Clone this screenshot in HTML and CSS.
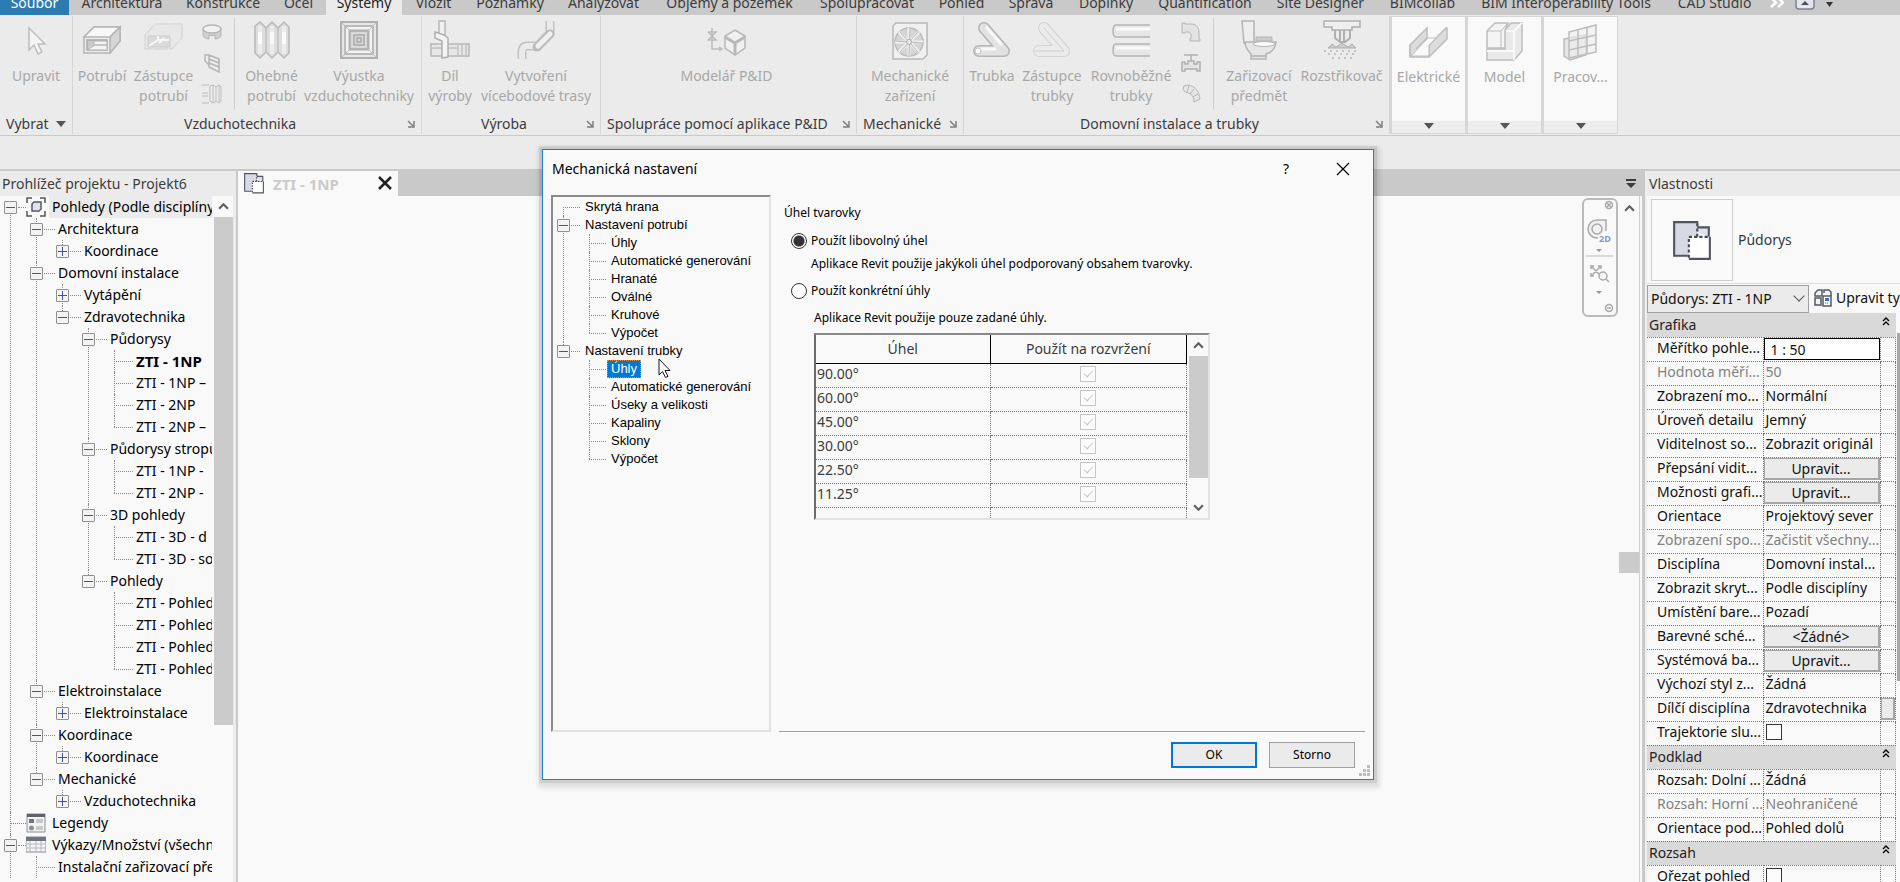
FILE: index.html
```html
<!DOCTYPE html>
<html lang="cs">
<head>
<meta charset="utf-8">
<title>Mechanická nastavení</title>
<link rel="stylesheet" href="styles.css">
</head>
<body>
<svg class="defs" aria-hidden="true">
  <symbol id="plan" viewBox="0 0 40 40">
    <path d="M3 3h22v5h11v9" fill="#dfe2ea" stroke="#50545e" stroke-width="2"/>
    <path d="M3 3h22v13h-8v19H3z" fill="#d6dae4"/>
    <path d="M25 3H3v32h13" fill="none" stroke="#50545e" stroke-width="2"/>
    <path d="M17 17h20v21H17z" fill="#fff"/>
    <path d="M37 17v21H17" fill="none" stroke="#50545e" stroke-width="2"/>
    <path d="M25 4v13M17 37V17h20" fill="none" stroke="#454952" stroke-width="2" stroke-dasharray="3 2"/>
  </symbol>
  <symbol id="launch" viewBox="0 0 8 8"><path d="M1 1l5 5M7 1v6H1" fill="none" stroke="#808080" stroke-width="1.5"/></symbol>
  <symbol id="down" viewBox="0 0 10 6"><path d="M0 0h10L5 6z"/></symbol>
  <symbol id="chev" viewBox="0 0 10 6"><path d="M1 5l4-4 4 4" fill="none" stroke="#606060" stroke-width="2"/></symbol>
  <symbol id="fold" viewBox="0 0 8 9"><path d="M1 4l3-3 3 3M1 8l3-3 3 3" fill="none" stroke="#000" stroke-width="1.4"/></symbol>
</svg>

<nav class="tabs" aria-label="Karty">
  <a class="file" href="#">Soubor</a><a href="#">Architektura</a><a href="#">Konstrukce</a><a href="#">Ocel</a><a class="on" href="#">Systémy</a><a href="#">Vložit</a><a href="#">Poznámky</a><a href="#">Analyzovat</a><a href="#">Objemy a pozemek</a><a href="#">Spolupracovat</a><a href="#">Pohled</a><a href="#">Správa</a><a href="#">Doplňky</a><a href="#">Quantification</a><a href="#">Site Designer</a><a href="#">BIMcollab</a><a href="#">BIM Interoperability Tools</a><a href="#">CAD Studio</a>
  <span class="tab-tools">
    <svg width="14" height="10" viewBox="0 0 14 10"><path d="M1 -2l5 4.500L1 7M8 -2l5 4.500L8 7" fill="none" stroke="#fff" stroke-width="2.500"/></svg>
    <svg width="20" height="12" viewBox="0 0 20 12"><rect x="1" y="-7" width="18" height="16" rx="3" fill="#e4e6ec" stroke="#7d8290" stroke-width="1.500"/><path d="M6 5l4-4 4 4z" fill="#4a4f5a"/></svg>
    <svg width="7" height="10" viewBox="0 0 7 10"><path d="M0 2h7L3.500 7z" fill="#333"/></svg>
  </span>
</nav>

<section class="ribbon">
  <div class="panel p-sel">
    <div class="tools"><button class="tool">
      <svg viewBox="0 0 40 40"><path d="M13 8v22l5-5 4 9 4-2-4-8h7z" fill="#f4f4f4" stroke="#bdbdbd" stroke-width="1.500"/></svg>Upravit</button></div>
    <div class="cap">Vybrat <svg class="tri" width="10" height="6"><use href="#down"/></svg></div>
  </div>
  <div class="panel p-hvac">
    <div class="tools">
      <button class="tool"><svg viewBox="0 0 40 40"><path d="M2 17L12 7h26v14L28 33H2z" fill="#ececec" stroke="#b5b5b5" stroke-width="1.500"/><path d="M2 17L12 7h26L28 17z" fill="#f8f8f8" stroke="#b5b5b5" stroke-width="1.500"/><path d="M28 17l10-10v14L28 33z" fill="#d6d6d6" stroke="#b5b5b5" stroke-width="1.500"/><path d="M5 20h20v10H5z" fill="#c9c9c9" stroke="#aaa" stroke-width="1.500"/><path d="M12 21h13v4H12zM5 30l8-5h12v5z" fill="#f3f3f3" stroke="#b5b5b5"/></svg>Potrubí</button>
      <button class="tool"><svg viewBox="0 0 40 40"><path d="M1 15L11 4h27v14L28 29H1z" fill="#e8e8e8" stroke="#cfcfcf" stroke-dasharray="14 1"/><path d="M4 16h22v11H4z" fill="#dadada" stroke="#ccc"/><path d="M5 26l9-6h11M14 20v-4M15 23l5-5" fill="none" stroke="#f7f7f7" stroke-width="2"/></svg>Zástupce<br>potrubí</button>
      <span class="stack">
        <svg viewBox="0 0 20 20"><path d="M1 7v6c0 2 3 4 6 4v-4c2 1 4 1 6 0v4c3 0 6-2 6-4V7z" fill="#d0d0d0" stroke="#b5b5b5"/><ellipse cx="10" cy="7" rx="9" ry="4" fill="#f0f0f0" stroke="#b5b5b5" stroke-width="1.500"/></svg>
        <svg viewBox="0 0 20 20"><path d="M7 2l10 4v13L7 14zM7 6l10 4M7 10l10 4M7 2L3 2v6l4 4" fill="none" stroke="#b5b5b5" stroke-width="1.500"/></svg>
        <svg viewBox="0 0 20 20"><path d="M0 1h7M0 9h6M0 12h6M0 19h7" stroke="#bbb" fill="none"/><path d="M8 2l3-1 3 2 3-2 2 2v14l-2 2-3-2-3 2-3-2zM11 1v17M14 3v14M17 1v17" fill="#efefef" stroke="#bbb"/></svg>
      </span>
      <i class="bar"></i>
      <button class="tool"><svg viewBox="0 0 40 40"><path d="M3 6l5-4 6 6 6-6 6 6 6-6 5 5v26l-5 5-6-6-6 6-6-6-6 6-5-5z" fill="#ddd" stroke="#b9b9b9" stroke-width="1.500"/><path d="M8 6v28M20 6v28M32 6v28" stroke="#ececec" stroke-width="4"/><path d="M8 12v12M20 12v12M32 12v12" stroke="#fafafa" stroke-width="4"/><path d="M14 8v25M26 8v25" stroke="#c2c2c2" stroke-width="1.500"/></svg>Ohebné<br>potrubí</button>
      <button class="tool"><svg viewBox="0 0 40 40"><path d="M2 2h36v36H2z" fill="#e6e6e6" stroke="#b0b0b0" stroke-width="2"/><path d="M6 6h28v28H6z" fill="#cfcfcf" stroke="#b0b0b0" stroke-width="1.500"/><path d="M8 8h24v24H8z" fill="none" stroke="#f2f2f2" stroke-width="2"/><path d="M11 11h18v18H11zM15 15h10v10H15zM18 18h4v4h-4z" fill="#d9d9d9" stroke="#a9a9a9" stroke-width="1.500"/><path d="M2 2l9 9M38 2l-9 9M2 38l9-9M38 38l-9-9" stroke="#bcbcbc"/></svg>Výustka<br>vzduchotechniky</button>
    </div>
    <div class="cap">Vzduchotechnika<svg class="launch" width="8" height="8"><use href="#launch"/></svg></div>
  </div>
  <div class="panel p-fab">
    <div class="tools">
      <button class="tool"><svg viewBox="0 0 40 40"><path d="M9 1h6v14H9z" fill="#f2f2f2" stroke="#b8b8b8" stroke-width="1.500"/><path d="M1 24h38v12H1z" fill="#e6e6e6" stroke="#b8b8b8" stroke-width="1.500"/><path d="M1 28h26M28 24v12M32 24v12M36 24v12" stroke="#c2c2c2" stroke-width="1.500"/><path d="M5 12l9 3 4 3v19l-6 1V21l-7-3z" fill="#f4f4f4" stroke="#b0b0b0" stroke-width="1.500"/></svg>Díl<br>výroby</button>
      <button class="tool"><svg viewBox="0 0 40 40"><path d="M34 1v12L22 26H11c-4 0-5 3-5 7v6" fill="none" stroke="#c2c2c2" stroke-width="9"/><path d="M34 1v12L22 26H11c-4 0-5 3-5 7v6" fill="none" stroke="#eaeaea" stroke-width="6"/><path d="M34 14L21 27" stroke="#bcbcbc" stroke-width="9" stroke-linecap="round"/><path d="M34 14L22 26" stroke="#f0f0f0" stroke-width="5" stroke-linecap="round"/></svg>Vytvoření<br>vícebodové trasy</button>
    </div>
    <div class="cap">Výroba<svg class="launch" width="8" height="8"><use href="#launch"/></svg></div>
  </div>
  <div class="panel p-pid">
    <div class="tools"><button class="tool"><svg viewBox="0 0 40 40"><path d="M5 8v21h9M1 12h8l-8 8h8l-8-8M12 27l3 2-3 2" fill="none" stroke="#bcbcbc" stroke-width="1.500"/><path d="M28 10l10 6v12l-10 7-10-7V16z" fill="#f0f0f0" stroke="#b8b8b8" stroke-width="1.500"/><path d="M18 17l10 6 10-6M28 23v12" fill="none" stroke="#b8b8b8" stroke-width="3"/></svg>Modelář P&amp;ID</button></div>
    <div class="cap">Spolupráce pomocí aplikace P&amp;ID<svg class="launch" width="8" height="8"><use href="#launch"/></svg></div>
  </div>
  <div class="panel p-mech">
    <div class="tools"><button class="tool"><svg viewBox="0 0 40 40"><path d="M3 6l3-3h31v32l-4 4H3z" fill="#f0f0f0" stroke="#b8b8b8" stroke-width="1.500"/><circle cx="19" cy="22" r="14" fill="#d5d5d5" stroke="#bcbcbc" stroke-width="1.500"/><path d="M19 8v28M5 22h28M9 12l20 20M29 12L9 32" stroke="#f2f2f2" stroke-width="3"/><path d="M20 8l-1 28M5 21l28 2M10 12l18 20M28 12L10 32" stroke="#b5b5b5"/><circle cx="19" cy="22" r="2.500" fill="#eee" stroke="#aaa"/></svg>Mechanické<br>zařízení</button></div>
    <div class="cap">Mechanické<svg class="launch" width="8" height="8"><use href="#launch"/></svg></div>
  </div>
  <div class="panel p-pipe">
    <div class="tools">
      <button class="tool"><svg viewBox="0 0 40 40"><path d="M12 8l20 23H7" fill="none" stroke="#b5b5b5" stroke-width="12" stroke-linecap="round" stroke-linejoin="round"/><path d="M12 8l20 23H7" fill="none" stroke="#e2e2e2" stroke-width="9" stroke-linecap="round" stroke-linejoin="round"/><path d="M14 7l16 18M24 29H8" stroke="#f8f8f8" stroke-width="3"/><circle cx="6" cy="31" r="3" fill="#fafafa" stroke="#c4c4c4"/></svg>Trubka</button>
      <button class="tool"><svg viewBox="0 0 40 40"><path d="M12 8l20 23H7" fill="none" stroke="#d2d2d2" stroke-width="12" stroke-linecap="round" stroke-linejoin="round"/><path d="M12 8l20 23H7" fill="none" stroke="#ebebeb" stroke-width="10" stroke-linecap="round" stroke-linejoin="round"/><path d="M12 8l20 23H3" fill="none" stroke="#cdcdcd"/></svg>Zástupce<br>trubky</button>
      <button class="tool"><svg viewBox="0 0 40 40"><path d="M39 5H5c-4 0-4 12 0 12h34M39 24H5c-4 0-4 12 0 12h34" fill="#e6e6e6" stroke="#b5b5b5" stroke-width="1.500"/><path d="M5 9h34M5 28h34" stroke="#fafafa" stroke-width="3"/></svg>Rovnoběžné<br>trubky</button>
      <span class="stack">
        <svg viewBox="0 0 20 20"><path d="M1 1h3v1h6c6 0 8 4 8 9v6h1v2H9v-2h1v-4c0-2-1-3-3-3H4v1H1z" fill="#e3e3e3" stroke="#b5b5b5"/></svg>
        <svg viewBox="0 0 20 20"><path d="M3 2h14M10 2v6M7 8h6v3h3v-2h3v9h-3v-2H4v2H1V9h3v2h3z" fill="#e3e3e3" stroke="#b0b0b0" stroke-width="1.500"/></svg>
        <svg viewBox="0 0 20 20"><path d="M3 2l4-1c7 1 11 6 12 14l-6 3c0-6-3-9-9-10L2 5zM8 2L6 8M13 5l-4 5M17 10l-5 3" fill="#e6e6e6" stroke="#b5b5b5"/></svg>
      </span>
      <i class="bar"></i>
      <button class="tool"><svg viewBox="0 0 40 40"><path d="M3 1h12v22H5z" fill="#eee" stroke="#b5b5b5" stroke-width="1.500"/><path d="M17 17h16v4H17z" fill="#ccc" stroke="#b5b5b5"/><path d="M6 22h31c-1 8-6 11-10 12v5H12v-5c-3-3-6-8-6-12z" fill="#e6e6e6" stroke="#b5b5b5" stroke-width="1.500"/><ellipse cx="25" cy="24" rx="11" ry="2.500" fill="#f8f8f8" stroke="#b5b5b5"/><path d="M12 36h16" stroke="#bbb" stroke-width="2"/></svg>Zařizovací<br>předmět</button>
      <button class="tool"><svg viewBox="0 0 40 40"><path d="M2 1h36v6H30v3H10V7H2z" fill="#efefef" stroke="#b0b0b0" stroke-width="1.500"/><path d="M13 10v8l5 4h5l5-4v-8M18 10v12M22 10v12" fill="none" stroke="#b0b0b0" stroke-width="2"/><path d="M6 28l4-4 4 3 6-4 6 4 4-3 4 4z" fill="#ccc" stroke="#b0b0b0"/><path d="M2 31h36M6 34h28M10 38h20" stroke="#b8b8b8" stroke-width="1.500" stroke-dasharray="2 4"/></svg>Rozstřikovač</button>
    </div>
    <div class="cap">Domovní instalace a trubky<svg class="launch" width="8" height="8"><use href="#launch"/></svg></div>
  </div>
  <button class="mini"><svg viewBox="0 0 40 40"><path d="M1 24L18 7v10L1 34z" fill="#dcdcdc" stroke="#bdbdbd" stroke-width="1.500"/><path d="M1 24v12h19L38 18V7h-1L20 24v12" fill="#dcdcdc" stroke="#bdbdbd" stroke-width="1.500"/><path d="M2 35l17-18h8l-7 7v11z" fill="#fafafa" stroke="#bdbdbd"/></svg>Elektrické<span><svg class="tri" width="10" height="6"><use href="#down"/></svg></span></button>
  <button class="mini"><svg viewBox="0 0 40 40"><path d="M2 10l8-8h13l-2 5v20H2z" fill="#f4f4f4" stroke="#bdbdbd" stroke-width="1.500"/><path d="M2 10h14v17M16 10l6-7" fill="none" stroke="#bdbdbd"/><path d="M2 28h18V9l6-7h11v28l-8 9H2z" fill="#e9e9e9" stroke="#bdbdbd" stroke-width="1.500"/><path d="M29 39V10h-8M29 10l8-8M2 30h27" fill="none" stroke="#fafafa" stroke-width="2"/></svg>Model<span><svg class="tri" width="10" height="6"><use href="#down"/></svg></span></button>
  <button class="mini"><svg viewBox="0 0 40 40"><path d="M3 18l22-4v20L9 39l-6-4z" fill="#e6e6e6" stroke="#bdbdbd" stroke-width="1.500"/><path d="M8 11l27-7v27L8 37zM17 9v26M26 7v26M8 20l27-6M8 29l27-6" fill="#eee" fill-opacity=".6" stroke="#bdbdbd" stroke-width="1.500"/></svg>Pracov...<span><svg class="tri" width="10" height="6"><use href="#down"/></svg></span></button>
</section>
<div class="options"></div>

<main>
  <aside class="browser">
    <h2>Prohlížeč projektu - Projekt6</h2>
    <div class="scroller">
      <ul class="tree">
        <li><div class="row root"><button class="ex" aria-label="Sbalit"></button><svg width="20" height="20" viewBox="0 0 20 20"><path d="M1 6V1h5M14 1h5v5M19 14v5h-5M6 19H1v-5" fill="none" stroke="#555" stroke-width="1.500"/><path d="M6 7l2-2h7v7l-2 2H6z" fill="#e0e3ea" stroke="#555a66" stroke-width="1.500"/></svg><span class="hl">Pohledy (Podle disciplíny)</span></div>
          <ul>
            <li><div class="row"><button class="ex" aria-label="Sbalit"></button><span>Architektura</span></div>
              <ul><li><div class="row"><button class="ex plus" aria-label="Rozbalit"></button><span>Koordinace</span></div></li></ul></li>
            <li><div class="row"><button class="ex" aria-label="Sbalit"></button><span>Domovní instalace</span></div>
              <ul>
                <li><div class="row"><button class="ex plus" aria-label="Rozbalit"></button><span>Vytápění</span></div></li>
                <li><div class="row"><button class="ex" aria-label="Sbalit"></button><span>Zdravotechnika</span></div>
                  <ul>
                    <li><div class="row"><button class="ex" aria-label="Sbalit"></button><span>Půdorysy</span></div>
                      <ul><li><div class="row leaf"><b>ZTI - 1NP</b></div></li><li><div class="row leaf"><span>ZTI - 1NP –</span></div></li><li><div class="row leaf"><span>ZTI - 2NP</span></div></li><li><div class="row leaf"><span>ZTI - 2NP –</span></div></li></ul></li>
                    <li><div class="row"><button class="ex" aria-label="Sbalit"></button><span>Půdorysy stropů</span></div>
                      <ul><li><div class="row leaf"><span>ZTI - 1NP -</span></div></li><li><div class="row leaf"><span>ZTI - 2NP -</span></div></li></ul></li>
                    <li><div class="row"><button class="ex" aria-label="Sbalit"></button><span>3D pohledy</span></div>
                      <ul><li><div class="row leaf"><span>ZTI - 3D - d</span></div></li><li><div class="row leaf"><span>ZTI - 3D - so</span></div></li></ul></li>
                    <li><div class="row"><button class="ex" aria-label="Sbalit"></button><span>Pohledy</span></div>
                      <ul><li><div class="row leaf"><span>ZTI - Pohled</span></div></li><li><div class="row leaf"><span>ZTI - Pohled</span></div></li><li><div class="row leaf"><span>ZTI - Pohled</span></div></li><li><div class="row leaf"><span>ZTI - Pohled</span></div></li></ul></li>
                  </ul></li>
              </ul></li>
            <li><div class="row"><button class="ex" aria-label="Sbalit"></button><span>Elektroinstalace</span></div>
              <ul><li><div class="row"><button class="ex plus" aria-label="Rozbalit"></button><span>Elektroinstalace</span></div></li></ul></li>
            <li><div class="row"><button class="ex" aria-label="Sbalit"></button><span>Koordinace</span></div>
              <ul><li><div class="row"><button class="ex plus" aria-label="Rozbalit"></button><span>Koordinace</span></div></li></ul></li>
            <li><div class="row"><button class="ex" aria-label="Sbalit"></button><span>Mechanické</span></div>
              <ul><li><div class="row"><button class="ex plus" aria-label="Rozbalit"></button><span>Vzduchotechnika</span></div></li></ul></li>
          </ul></li>
        <li><div class="row root leaf"><svg width="20" height="20" viewBox="0 0 20 20"><path d="M1 1h18v18H1z" fill="#f2f2f2" stroke="#8a8d94"/><path d="M1 1h18v3H1z" fill="#5f646e"/><path d="M3 6h5v4H3z" fill="#70757f"/><circle cx="5.500" cy="15" r="2.500" fill="#8a8f98"/><path d="M10 7h7M10 9h7M10 14h7M10 16h7" stroke="#9a9ea6"/></svg><span class="name">Legendy</span></div></li>
        <li class="more"><div class="row root"><button class="ex" aria-label="Sbalit"></button><svg width="20" height="20" viewBox="0 0 20 20"><path d="M0 2h20v15H0z" fill="#f4f4f4" stroke="#8a8d94"/><path d="M0 2h20v4H0z" fill="#70747d"/><path d="M4 6v11M10 6v11M15 6v11M0 9h20M0 13h20" stroke="#b8bac0"/></svg><span class="name">Výkazy/Množství (všechny)</span></div>
          <ul><li class="more"><div class="row leaf"><span>Instalační zařizovací předměty</span></div></li></ul></li>
      </ul>
      <div class="vbar"><svg class="up" width="11" height="7"><use href="#chev"/></svg><i></i></div>
    </div>
  </aside>

  <section class="view">
    <div class="view-tabs">
      <div class="view-tab"><svg width="22" height="22"><use href="#plan"/></svg><b>ZTI - 1NP</b><button aria-label="Zavřít"><svg width="14" height="14" viewBox="0 0 14 14"><path d="M1 1l12 12M13 1L1 13" stroke="#222" stroke-width="2.500"/></svg></button></div>
      <svg class="list" width="10" height="10" viewBox="0 0 10 10"><path d="M0 0h10v2H0zM0 4h10L5 9z" fill="#3b3b3b"/></svg>
    </div>
    <div class="canvas">
      <div class="navbar">
        <svg width="36" height="118" viewBox="0 0 36 118">
          <g fill="none" stroke="#aaa" stroke-width="1.500"><circle cx="27" cy="7" r="3.500"/><path d="M25 5l4 4M29 5l-4 4M25 110h4"/><circle cx="27" cy="110" r="3.500"/>
          <path d="M24 33V22H15a9 9 0 0 0 0 18h1" fill="#f1f1f1"/><circle cx="15" cy="31" r="5"/><path d="M4 58h27" stroke="#ccc"/><path d="M9 68l9 9M19 68l-9 9M9 71v-3h3M16 68h3v3M9 75v3h3"/><circle cx="21" cy="78" r="4" fill="#f5f5f5"/><path d="M24 81l3 3"/></g>
          <text class="nav2d" x="17" y="44">2D</text><path d="M14 51h6l-3 3zM14 93h6l-3 3z" fill="#999"/></svg>
      </div>
      <div class="view-bar"><svg class="up" width="11" height="7"><use href="#chev"/></svg><i></i></div>
    </div>
  </section>

  <aside class="props">
    <h2>Vlastnosti</h2>
    <div class="type"><span class="thumb"><svg width="42" height="42"><use href="#plan"/></svg></span>Půdorys</div>
    <div class="pick"><select aria-label="Typ"><option>Půdorys: ZTI - 1NP</option></select>
      <button><svg width="18" height="18" viewBox="0 0 18 18"><path d="M1 4l3-3h4v6H1zM10 4V1h5l2 2v4M1 9h6v7H1z" fill="#f2f2f2" stroke="#555a66" stroke-width="1.500"/><path d="M9 7h8v10H9z" fill="#fff" stroke="#555a66" stroke-width="1.500"/><path d="M11 9h4v3h-4z" fill="#2e75b6"/><path d="M11 14h4" stroke="#555" stroke-dasharray="1 1"/></svg>Upravit typ</button></div>
    <div class="grid">
      <table>
        <colgroup><col class="c1"><col class="c2"><col class="c3"></colgroup>
        <tr class="sec"><th colspan="3">Grafika<svg width="8" height="9"><use href="#fold"/></svg></th></tr>
        <tr><td>Měřítko pohle...</td><td class="ctl"><input class="scale" value="1 : 50" aria-label="Měřítko pohledu"></td><td></td></tr>
        <tr class="dim"><td>Hodnota měří...</td><td>50</td><td></td></tr>
        <tr><td>Zobrazení mo...</td><td>Normální</td><td></td></tr>
        <tr><td>Úroveň detailu</td><td>Jemný</td><td></td></tr>
        <tr><td>Viditelnost so...</td><td>Zobrazit originál</td><td></td></tr>
        <tr><td>Přepsání vidit...</td><td class="ctl"><button>Upravit...</button></td><td></td></tr>
        <tr><td>Možnosti grafi...</td><td class="ctl"><button>Upravit...</button></td><td></td></tr>
        <tr><td>Orientace</td><td>Projektový sever</td><td></td></tr>
        <tr class="dim"><td>Zobrazení spo...</td><td>Začistit všechny...</td><td></td></tr>
        <tr><td>Disciplína</td><td>Domovní instal...</td><td></td></tr>
        <tr><td>Zobrazit skryt...</td><td>Podle disciplíny</td><td></td></tr>
        <tr><td>Umístění bare...</td><td>Pozadí</td><td></td></tr>
        <tr><td>Barevné sché...</td><td class="ctl"><button>&lt;Žádné&gt;</button></td><td></td></tr>
        <tr><td>Systémová ba...</td><td class="ctl"><button>Upravit...</button></td><td></td></tr>
        <tr><td>Výchozí styl z...</td><td>Žádná</td><td></td></tr>
        <tr><td>Dílčí disciplína</td><td>Zdravotechnika</td><td class="ctl"><button aria-label="Přidružit"></button></td></tr>
        <tr><td><label for="sun">Trajektorie slu...</label></td><td><input type="checkbox" id="sun"></td><td></td></tr>
        <tr class="sec"><th colspan="3">Podklad<svg width="8" height="9"><use href="#fold"/></svg></th></tr>
        <tr><td>Rozsah: Dolní ...</td><td>Žádná</td><td></td></tr>
        <tr class="dim"><td>Rozsah: Horní ...</td><td>Neohraničené</td><td></td></tr>
        <tr><td>Orientace pod...</td><td>Pohled dolů</td><td></td></tr>
        <tr class="sec"><th colspan="3">Rozsah<svg width="8" height="9"><use href="#fold"/></svg></th></tr>
        <tr><td><label for="crop">Ořezat pohled</label></td><td><input type="checkbox" id="crop"></td><td></td></tr>
      </table>
      <i class="thumbbar"></i>
    </div>
  </aside>
</main>

<div class="dialog" role="dialog" aria-labelledby="dt">
  <header><h1 id="dt">Mechanická nastavení</h1>
    <button aria-label="Nápověda">?</button>
    <button aria-label="Zavřít"><svg width="14" height="14" viewBox="0 0 14 14"><path d="M1 1l12 12M13 1L1 13" stroke="#000" stroke-width="1.200"/></svg></button></header>
  <div class="body">
    <div class="list-box">
      <ul class="tree small">
        <li><div class="row leaf"><span>Skrytá hrana</span></div></li>
        <li><div class="row"><button class="ex" aria-label="Sbalit"></button><span>Nastavení potrubí</span></div>
          <ul><li><div class="row leaf"><span>Úhly</span></div></li><li><div class="row leaf"><span>Automatické generování</span></div></li><li><div class="row leaf"><span>Hranaté</span></div></li><li><div class="row leaf"><span>Oválné</span></div></li><li><div class="row leaf"><span>Kruhové</span></div></li><li><div class="row leaf"><span>Výpočet</span></div></li></ul></li>
        <li><div class="row"><button class="ex" aria-label="Sbalit"></button><span>Nastavení trubky</span></div>
          <ul><li><div class="row leaf"><span class="sel">Úhly</span></div></li><li><div class="row leaf"><span>Automatické generování</span></div></li><li><div class="row leaf"><span>Úseky a velikosti</span></div></li><li><div class="row leaf"><span>Kapaliny</span></div></li><li><div class="row leaf"><span>Sklony</span></div></li><li><div class="row leaf"><span>Výpočet</span></div></li></ul></li>
      </ul>
    </div>
    <div class="page">
      <h3>Úhel tvarovky</h3>
      <label class="opt"><input type="radio" name="angle" checked>Použít libovolný úhel</label>
      <p>Aplikace Revit použije jakýkoli úhel podporovaný obsahem tvarovky.</p>
      <label class="opt"><input type="radio" name="angle">Použít konkrétní úhly</label>
      <p class="second">Aplikace Revit použije pouze zadané úhly.</p>
      <div class="angles">
        <table>
          <tr><th>Úhel</th><th>Použít na rozvržení</th></tr>
          <tr><td>90.00°</td><td><input type="checkbox" aria-label="90.00°" checked disabled></td></tr>
          <tr><td>60.00°</td><td><input type="checkbox" aria-label="60.00°" checked disabled></td></tr>
          <tr><td>45.00°</td><td><input type="checkbox" aria-label="45.00°" checked disabled></td></tr>
          <tr><td>30.00°</td><td><input type="checkbox" aria-label="30.00°" checked disabled></td></tr>
          <tr><td>22.50°</td><td><input type="checkbox" aria-label="22.50°" checked disabled></td></tr>
          <tr><td>11.25°</td><td><input type="checkbox" aria-label="11.25°" checked disabled></td></tr>
          <tr><td></td><td></td></tr>
        </table>
        <div class="abar"><svg class="up" width="11" height="7"><use href="#chev"/></svg><i></i><svg class="dn" width="11" height="7" viewBox="0 0 10 6"><path d="M1 1l4 4 4-4" fill="none" stroke="#606060" stroke-width="2"/></svg></div>
      </div>
    </div>
  </div>
  <footer><button class="ok">OK</button><button>Storno</button></footer>
  <svg class="grip" width="12" height="12" viewBox="0 0 12 12"><path d="M8 0h3v3H8zM4 4h3v3H4zM8 4h3v3H8zM0 8h3v3H0zM4 8h3v3H4zM8 8h3v3H8z" fill="#bdbdbd"/></svg>
  <svg class="cursor" width="13" height="20" viewBox="0 0 13 20"><path d="M1 1v16l3.500-3.500 3 6 2.500-1.200-3-5.800h5z" fill="#fff" stroke="#112" /></svg>
</div>
</body>
</html>
```
FILE: styles.css
```css
:root {
  --ui: "Noto Sans", "Open Sans", sans-serif;
  --paper: #f9f9f9;
  --chrome: #ebebeb;
  --line: #c9c9c9;
}
* { box-sizing: border-box; }
body {
  margin: 0;
  height: 100vh;
  display: flex;
  flex-direction: column;
  overflow: hidden;
  background: var(--chrome);
  color: #000;
  font: 14px/20px var(--ui);
}
button, input, select { font: inherit; color: inherit; margin: 0; padding: 0; }
button { background: none; border: 0; white-space: nowrap; }
h1, h2, h3, p, ul { margin: 0; padding: 0; font-weight: normal; list-style: none; }
svg { flex: none; display: block; }
.defs { position: absolute; width: 0; height: 0; }

/* ribbon tabs */
.tabs {
  flex: none;
  height: 15px;
  display: grid;
  grid-template-columns: 69px 106px 96px 55px 76px 63px 90px 97px 155px 120px 69px 70px 80px 118px 113px 91px 196px 101px 1fr;
  align-content: end;
  align-items: end;
  overflow: hidden;
  background: var(--line);
}
.tabs a { color: #3c3c3c; text-decoration: none; text-align: center; white-space: nowrap; line-height: 24px; }
.tabs .file { background: #2b7bb3; color: #fff; }
.tabs .on { background: var(--chrome); color: #222; }
.tab-tools { display: flex; align-items: flex-start; gap: 11px; height: 15px; padding-left: 5px; }

/* ribbon */
.ribbon { flex: none; display: flex; height: 121px; padding-top: 1px; border-bottom: 1px solid var(--line); }
.panel { display: flex; flex-direction: column; height: 118px; border-right: 1px solid #d6d6d6; }
.p-sel { width: 73px; }
.p-hvac { width: 349px; }
.p-fab { width: 179px; }
.p-pid { width: 256px; }
.p-mech { width: 107px; }
.p-pipe { width: 426px; }
.tools { flex: 1; display: grid; justify-content: start; padding-top: 4px; }
.p-sel .tools { grid-template-columns: 72px; }
.p-hvac .tools { grid-template-columns: 58px 65px 32px 12px 63px 112px; }
.p-fab .tools { grid-template-columns: 56px 116px; }
.p-pid .tools { grid-template-columns: 251px; }
.p-mech .tools { grid-template-columns: 106px; }
.p-pipe .tools { grid-template-columns: 56px 64px 94px 26px 18px 74px 91px; }
.tool, .mini { display: flex; flex-direction: column; align-items: center; color: #a8a8a8; text-align: center; }
.tool > svg, .mini > svg { width: 40px; height: 40px; margin-bottom: 6px; }
.stack { display: flex; flex-direction: column; align-items: center; gap: 11px; padding-top: 2px; }
.stack svg { width: 20px; height: 20px; }
.bar { width: 1px; height: 91px; margin: -2px auto 0; background: #cdcdcd; }
.cap { display: flex; align-items: center; height: 20px; padding-left: 6px; color: #3c3c3c; white-space: nowrap; }
.cap .launch { margin-left: auto; margin-right: 6px; }
.p-hvac .cap::before, .p-fab .cap::before, .p-pipe .cap::before { content: ""; margin-right: auto; }
.p-hvac .cap, .p-fab .cap, .p-pipe .cap { padding-left: 0; }
.tri { fill: #555; }
.p-sel .tri { margin-left: 7px; }
.mini { width: 76px; height: 118px; padding-top: 4px; background: var(--paper); border: 1px solid #d6d6d6; border-width: 1px 1px 1px 2px; }
.mini span { margin-top: auto; align-self: stretch; height: 12px; padding-top: 2px; background: #ededf0; }
.mini .tri { margin: 0 auto; }
.options { flex: none; height: 35px; border-bottom: 2px solid var(--line); }

main { flex: 1; min-height: 0; display: flex; background: var(--paper); }
h2 { flex: none; height: 25px; padding-left: 2px; background: var(--chrome); color: #3c3c3c; font-size: 14px; line-height: 25px; }

/* trees */
.browser { width: 238px; flex: none; display: flex; flex-direction: column; border-right: 2px solid var(--line); }
.scroller { flex: 1; min-height: 0; display: flex; overflow: hidden; }
.scroller > .tree { flex: 1; min-width: 0; overflow: hidden; }
.tree li { position: relative; }
.tree li::before { content: ""; position: absolute; left: 10px; top: 0; bottom: 0; border-left: 1px dotted #888; }
.tree li:last-child::before { bottom: auto; height: 11px; }
.tree li.more::before { bottom: 0; height: auto; }
.tree > li:first-child::before { top: 11px; }
.tree ul { margin-left: 26px; }
.row { position: relative; display: flex; align-items: center; height: 22px; padding-left: 4px; white-space: nowrap; }
.row::before { content: ""; order: 1; flex: none; width: 11px; margin: 0 3px 0 1px; border-top: 1px dotted #888; }
.row > * { order: 2; }
.row > .ex { order: 0; flex: none; width: 13px; height: 13px; border: 1px solid #919191; border-radius: 1px; background: linear-gradient(#3b56a5, #3b56a5) center / 9px 1px no-repeat, #f3f3f3; }
.row > .plus { background: linear-gradient(#3b56a5, #3b56a5) center / 9px 1px no-repeat, linear-gradient(#3b56a5, #3b56a5) center / 1px 9px no-repeat, #f3f3f3; }
.row.leaf { padding-left: 10px; }
.row.leaf::before { width: 19px; margin: 0 3px 0 0; }
.row b { font-size: 15px; line-height: 22px; }
.row.root::before { width: 8px; margin-right: 0; }
.row.root.leaf::before { width: 16px; }
.hl { margin-left: 3px; padding: 0 3px; background: var(--chrome); line-height: 22px; }
.name { margin-left: 6px; }
.vbar { width: 24px; flex: none; padding-left: 2px; border-right: 3px solid #ececec; background: linear-gradient(var(--paper), var(--paper)); }
.vbar .up { margin: 7px auto; }
.vbar i { display: block; height: 508px; background: #cbcbcb; }

/* drawing view */
.view { flex: 1; min-width: 0; display: flex; flex-direction: column; border-right: 3px solid var(--line); }
.view-tabs { flex: none; display: flex; justify-content: space-between; height: 25px; background: var(--line); }
.view-tab { display: flex; align-items: center; width: 160px; padding-left: 5px; background: var(--paper); color: #cbcbcb; }
.view-tab b { margin-left: 8px; font-size: 15px; line-height: 24px; }
.view-tab svg { margin-bottom: 1px; }
.view-tab button { margin: 0 6px 0 auto; }
.view-tabs .list { margin: 8px 6px 0 0; }
.canvas { flex: 1; display: flex; justify-content: flex-end; margin-right: 2px; border-right: 1px solid #d0d0d0; }
.navbar { height: 119px; width: 36px; margin: 2px 0 0; border: 2px solid #bababa; border-radius: 6px; background: var(--paper); }
.navbar svg { margin: -2px; }
.nav2d { font: bold 9px var(--ui); fill: #7d9fcf; }
.view-bar { width: 20px; margin-left: 1px; }
.view-bar .up { margin: 9px auto 0; }
.view-bar i { display: block; height: 21px; margin-top: 340px; background: #cbcbcb; }

/* properties */
.props { width: 255px; flex: none; display: flex; flex-direction: column; overflow: hidden; border-left: 2px solid #efefef; color: #111; }
.type { flex: none; display: flex; align-items: center; gap: 5px; height: 88px; padding-left: 4px; border-bottom: 1px solid #ddd; color: #333a4a; }
.thumb { display: grid; place-items: center; width: 82px; height: 82px; border: 1px solid #ccc; }
.pick { position: relative; flex: none; display: flex; align-items: center; gap: 5px; height: 29px; }
.pick select { appearance: none; flex: none; width: 162px; height: 28px; padding-left: 3px; border: 1px solid #a0a0a0; border-radius: 0; background: var(--chrome); }
.pick::after { content: ""; position: absolute; left: 148px; top: 8px; width: 7px; height: 7px; border: solid #555; border-width: 0 1px 1px 0; transform: rotate(45deg); }
.pick button { display: flex; align-items: center; gap: 4px; padding-bottom: 2px; }
.grid { flex: none; display: flex; gap: 1px; }
.props table { width: 249px; flex: none; table-layout: fixed; border-collapse: collapse; white-space: nowrap; }
.c1 { width: 116px; }
.c2 { width: 117px; }
.props tr { height: 24px; }
.props td { height: 24px; padding: 0 0 2px 2px; border: 1px dotted #777; border-left-width: 0; overflow: hidden; line-height: 20px; }
.props td:first-child { padding-left: 10px; }
.props .sec th { height: 24px; padding: 0 6px 0 2px; background: #d9d9d9; color: #222; font-weight: normal; text-align: left; }
.sec svg { float: right; margin-top: 2px; }
.dim { color: #828282; }
.props td.ctl { padding: 0; }
.ctl > * { display: block; width: 100%; height: 22px; line-height: 18px; }
.ctl button { border: 1px solid #a6a6a6; border-width: 1px 2px 2px 1px; background: var(--chrome); }
.scale { border: 1px solid #000; background: #fff; padding-left: 6px; }
input[type="checkbox"] { appearance: none; display: block; width: 16px; height: 16px; border: 1px solid #333; background: #fcfcfc; }
.thumbbar { width: 5px; height: 348px; margin-top: 20px; background: #a8a8a8; }

/* dialog */
.dialog {
  position: absolute;
  left: 542px;
  top: 149px;
  width: 832px;
  min-height: 631px;
  display: flex;
  flex-direction: column;
  border: 1px solid #1f7fce;
  background: var(--paper);
  box-shadow: 0 0 0 3px rgba(0, 0, 0, .08), 1px 3px 4px 5px rgba(0, 0, 0, .1);
  font: 12px/18px var(--ui);
}
.dialog header { display: flex; align-items: center; height: 45px; padding: 0 23px 7px 9px; font: 14px/20px var(--ui); }
.dialog h1 { margin-right: auto; font-size: 14px; }
.dialog header button + button { margin-left: 47px; }
.body { flex: 1; display: grid; grid-template-columns: 220px 1fr; gap: 8px; padding: 0 8px; }
.list-box { padding: 1px 0; border: 2px solid; border-color: #8a8a8a #e3e3e3 #e3e3e3 #8a8a8a; overflow: hidden; }
.small .row { height: 18px; font: 13px/18px "Liberation Sans", Arial, sans-serif; }
.small.tree li:last-child::before { height: 9px; }
.small.tree > li:first-child::before { top: 9px; }
.small .row.leaf::before { width: 17px; margin-right: 5px; }
.small .row::before { width: 9px; margin-right: 5px; }
.small .row > .sel { margin-left: -4px; padding: 0 4px; background: #0078d7; color: #fff; outline: 1px dotted #e08a3c; outline-offset: -1px; }
.page { padding: 9px 0 0 5px; border-bottom: 1px solid #a0a0a0; }
.page h3 { font-size: 12px; line-height: 18px; margin-bottom: 8px; }
.opt { display: flex; align-items: center; gap: 4px; height: 22px; padding-left: 7px; }
.opt + p { padding-left: 27px; margin: 2px 0 6px; line-height: 20px; }
input[type="radio"] { appearance: none; width: 16px; height: 16px; border: 1px solid #333; border-radius: 50%; background: #fff; }
input[type="radio"]:checked { background: radial-gradient(circle, #333 5px, transparent 6px) #fff; }
.page .second { padding: 4px 0 0 30px; margin-bottom: 5px; }
.angles { display: flex; width: 396px; height: 187px; margin-left: 30px; overflow: hidden; border: 2px solid; border-color: #8a8a8a #e3e3e3 #e3e3e3 #6c6c6c; }
.angles table { width: 372px; table-layout: fixed; border-collapse: collapse; color: #3c3c3c; font: 14px/20px var(--ui); }
.angles tr { height: 24px; }
.angles th { height: 28px; padding: 0; border: 1px solid #000; border-top: 0; font-weight: normal; }
.angles th:first-child { width: 174px; border-left: 0; }
.angles td { height: 24px; padding: 0 1px 2px; border: 1px dotted #777; }
.angles td:first-child { border-left: 0; }
.angles input { position: relative; margin: 0 auto; border-color: #c6c6c6; }
.angles input::after { content: ""; position: absolute; left: 5px; top: 1px; width: 4px; height: 8px; border: solid #c6c6c6; border-width: 0 1px 1px 0; transform: rotate(45deg); }
.abar { width: 19px; margin-left: 2px; display: flex; flex-direction: column; align-items: center; }
.abar .up { margin: 7px 0; }
.abar i { width: 19px; height: 122px; background: #cbcbcb; }
.abar .dn { margin-top: auto; margin-bottom: 7px; }
footer { display: flex; justify-content: flex-end; gap: 12px; height: 47px; padding: 10px 18px 0 0; }
footer button { width: 86px; height: 26px; border: 1px solid #a0a0a0; background: var(--chrome); }
footer .ok { border: 2px solid #0078d7; }
.grip { position: absolute; right: 2px; bottom: 2px; }
.cursor { position: absolute; left: 115px; top: 208px; }
```
